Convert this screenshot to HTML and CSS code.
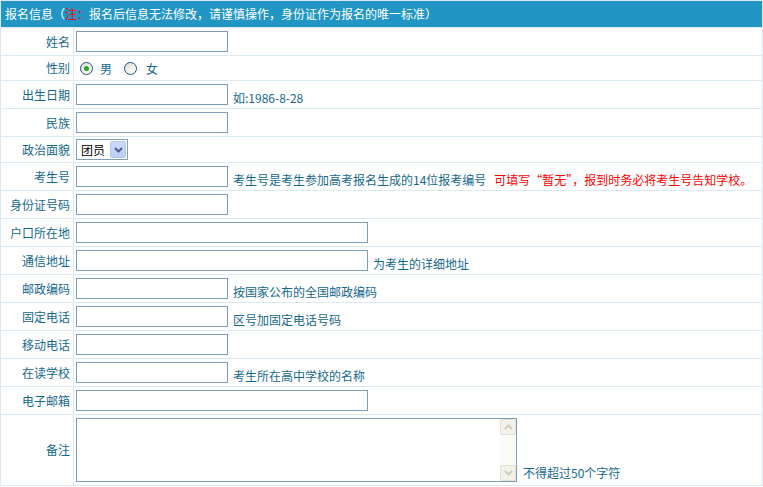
FILE: index.html
```html
<!DOCTYPE html>
<html lang="zh-CN">
<head>
<meta charset="utf-8">
<title>报名信息</title>
<link rel="stylesheet" href="styles.css">
</head>
<body>
<table class="form">
  <colgroup><col class="c-label"><col class="c-value"></colgroup>
  <tr class="r-head">
    <td colspan="2" class="head">报名信息（<span class="red">注：</span>报名后信息无法修改，请谨慎操作，身份证作为报名的唯一标准）</td>
  </tr>
  <tr class="r27">
    <td class="label">姓名</td>
    <td class="value"><input class="txt" type="text"></td>
  </tr>
  <tr class="r24">
    <td class="label">性别</td>
    <td class="value">
      <span class="radios">
        <input class="radio first" type="radio" name="sex" checked><span class="opt">男</span><input class="radio second" type="radio" name="sex"><span class="opt">女</span>
      </span>
    </td>
  </tr>
  <tr class="r27">
    <td class="label">出生日期</td>
    <td class="value"><input class="txt" type="text"><span class="hint">如:1986-8-28</span></td>
  </tr>
  <tr class="r27">
    <td class="label">民族</td>
    <td class="value"><input class="txt" type="text"></td>
  </tr>
  <tr class="r25">
    <td class="label">政治面貌</td>
    <td class="value">
      <div class="select"><span class="sel-text">团员</span><span class="sel-btn"><svg width="9" height="6" viewBox="0 0 9 6"><path d="M1 1 L4.5 4.5 L8 1" fill="none" stroke="#4d6185" stroke-width="2"/></svg></span></div>
    </td>
  </tr>
  <tr class="r27">
    <td class="label">考生号</td>
    <td class="value"><input class="txt" type="text"><span class="hint">考生号是考生参加高考报名生成的14位报考编号</span><span class="hint-red">可填写“暂无”，报到时务必将考生号告知学校。</span></td>
  </tr>
  <tr class="r27">
    <td class="label">身份证号码</td>
    <td class="value"><input class="txt" type="text"></td>
  </tr>
  <tr class="r27">
    <td class="label">户口所在地</td>
    <td class="value"><input class="txt wide" type="text"></td>
  </tr>
  <tr class="r27">
    <td class="label">通信地址</td>
    <td class="value"><input class="txt wide" type="text"><span class="hint">为考生的详细地址</span></td>
  </tr>
  <tr class="r27">
    <td class="label">邮政编码</td>
    <td class="value"><input class="txt" type="text"><span class="hint">按国家公布的全国邮政编码</span></td>
  </tr>
  <tr class="r27">
    <td class="label">固定电话</td>
    <td class="value"><input class="txt" type="text"><span class="hint">区号加固定电话号码</span></td>
  </tr>
  <tr class="r27">
    <td class="label">移动电话</td>
    <td class="value"><input class="txt" type="text"></td>
  </tr>
  <tr class="r27">
    <td class="label">在读学校</td>
    <td class="value"><input class="txt" type="text"><span class="hint">考生所在高中学校的名称</span></td>
  </tr>
  <tr class="r27">
    <td class="label">电子邮箱</td>
    <td class="value"><input class="txt wide" type="text"></td>
  </tr>
  <tr class="r70">
    <td class="label">备注</td>
    <td class="value">
      <div class="area-row">
        <div class="area-wrap">
          <textarea class="area"></textarea>
          <div class="sbar">
            <span class="sbtn"><svg width="9" height="6" viewBox="0 0 9 6"><path d="M1 5 L4.5 1.5 L8 5" fill="none" stroke="#cfcdc2" stroke-width="2"/></svg></span>
            <span class="strack"></span>
            <span class="sbtn"><svg width="9" height="6" viewBox="0 0 9 6"><path d="M1 1 L4.5 4.5 L8 1" fill="none" stroke="#cfcdc2" stroke-width="2"/></svg></span>
          </div>
        </div>
        <span class="hint area-hint">不得超过50个字符</span>
      </div>
    </td>
  </tr>
</table>
</body>
</html>
```

FILE: styles.css
```css
html, body {
  margin: 0;
  padding: 0;
  background: #ffffff;
}

body {
  font-family: "Noto Sans CJK SC", "Liberation Sans", sans-serif;
  font-size: 12px;
  color: #15688c;
}

.form {
  width: 763px;
  border-collapse: separate;
  border-spacing: 1px;
  background: #dbe9f2;
  table-layout: fixed;
}

.c-label { width: 72px; }

.form td {
  background: #ffffff;
  padding: 0;
  line-height: 16px;
  vertical-align: middle;
}

.r-head td { height: 26px; }
.r27 td { height: 27px; }
.r24 td { height: 24px; }
.r25 td { height: 25px; }
.r70 td { height: 70px; }

.head {
  background: #2196c4 !important;
  color: #ffffff;
  padding-left: 4px !important;
  white-space: nowrap;
}

.red { color: #ff0000; }

.label {
  text-align: right;
  padding-right: 3px !important;
  white-space: nowrap;
}

.value {
  padding-left: 2px !important;
  white-space: nowrap;
}

.txt {
  box-sizing: border-box;
  width: 152px;
  height: 21px;
  border: 1px solid #7f9db9;
  margin: 0;
  padding: 1px 3px;
  font-family: inherit;
  font-size: 12px;
  vertical-align: middle;
  background: #fff;
}

.txt.wide { width: 292px; }

.hint {
  margin-left: 5px;
  vertical-align: middle;
  position: relative;
  top: 3px;
}

.hint-red {
  margin-left: 8px;
  color: #ff0000;
  vertical-align: middle;
  position: relative;
  top: 3px;
}

/* radios */
.radios {
  display: inline-flex;
  align-items: center;
  position: relative;
  top: 1px;
}

.radio {
  -webkit-appearance: none;
  appearance: none;
  box-sizing: border-box;
  width: 13px;
  height: 13px;
  margin: 0;
  border: 1px solid #1d5281;
  border-radius: 50%;
  background: linear-gradient(135deg, #dcdcd4 0%, #f4f4f0 60%, #ffffff 100%);
  position: relative;
}

.radio.first { margin-left: 4px; }
.radio.second { margin-left: 12px; }

.radio:checked::after {
  content: "";
  position: absolute;
  left: 3px;
  top: 3px;
  width: 5px;
  height: 5px;
  border-radius: 50%;
  background: #22a525;
}

.opt {
  color: #15688c;
  margin-left: 7px;
  position: relative;
  top: 1px;
}

.radio.second + .opt { margin-left: 9px; }

/* select */
.select {
  box-sizing: border-box;
  display: inline-flex;
  align-items: center;
  justify-content: space-between;
  width: 52px;
  height: 21px;
  border: 1px solid #7f9db9;
  background: #fff;
  vertical-align: middle;
}

.sel-text {
  color: #000;
  padding-left: 4px;
}

.sel-btn {
  box-sizing: border-box;
  width: 16px;
  height: 17px;
  margin-right: 1px;
  border-radius: 2px;
  background: linear-gradient(180deg, #cbdcfd 0%, #b8cdf8 100%);
  border: 1px solid #b3c7f1;
  display: flex;
  align-items: center;
  justify-content: center;
}

/* textarea */
.area-row {
  display: flex;
  align-items: flex-end;
}

.area-wrap {
  position: relative;
  width: 441px;
  height: 64px;
}

.area {
  box-sizing: border-box;
  display: block;
  width: 441px;
  height: 64px;
  border: 1px solid #7f9db9;
  margin: 0;
  resize: none;
  overflow: hidden;
  font-family: inherit;
  font-size: 12px;
}

.sbar {
  position: absolute;
  right: 1px;
  top: 1px;
  bottom: 1px;
  width: 16px;
  background: #fbfbf6;
  display: flex;
  flex-direction: column;
}

.sbtn {
  box-sizing: border-box;
  height: 16px;
  width: 16px;
  background: #f2f1ea;
  border: 1px solid #e3e1d6;
  border-radius: 2px;
  display: flex;
  align-items: center;
  justify-content: center;
}

.strack { flex: 1; }

.area-hint {
  top: 0;
  margin-left: 6px;
  margin-bottom: 1px;
}
```
